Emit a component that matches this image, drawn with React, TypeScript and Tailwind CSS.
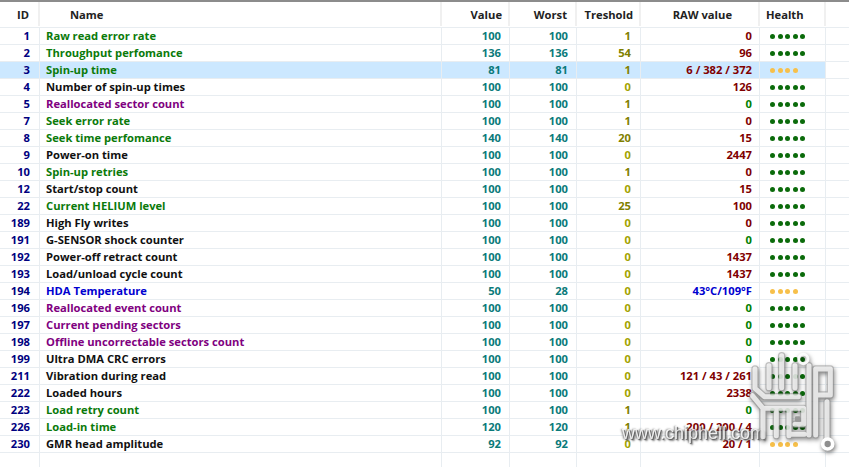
const GREEN = "text-[#0a7a0a]";
const BLACK = "text-[#111111]";
const PURPLE = "text-[#800080]";
const BLUE = "text-[#0000d0]";
const OK = "text-[#008000]";

type Row = {
  id: number;
  name: string;
  color: string;
  value: number;
  worst: number;
  tresh: number;
  raw: string;
  rawColor?: string;
  dots?: number;
  selected?: boolean;
};

const ROWS: Row[] = [
  { id: 1, name: "Raw read error rate", color: GREEN, value: 100, worst: 100, tresh: 1, raw: "0" },
  { id: 2, name: "Throughput perfomance", color: GREEN, value: 136, worst: 136, tresh: 54, raw: "96" },
  { id: 3, name: "Spin-up time", color: GREEN, value: 81, worst: 81, tresh: 1, raw: "6 / 382 / 372", dots: 4, selected: true },
  { id: 4, name: "Number of spin-up times", color: BLACK, value: 100, worst: 100, tresh: 0, raw: "126" },
  { id: 5, name: "Reallocated sector count", color: PURPLE, value: 100, worst: 100, tresh: 1, raw: "0", rawColor: OK },
  { id: 7, name: "Seek error rate", color: GREEN, value: 100, worst: 100, tresh: 1, raw: "0" },
  { id: 8, name: "Seek time perfomance", color: GREEN, value: 140, worst: 140, tresh: 20, raw: "15" },
  { id: 9, name: "Power-on time", color: BLACK, value: 100, worst: 100, tresh: 0, raw: "2447" },
  { id: 10, name: "Spin-up retries", color: GREEN, value: 100, worst: 100, tresh: 1, raw: "0" },
  { id: 12, name: "Start/stop count", color: BLACK, value: 100, worst: 100, tresh: 0, raw: "15" },
  { id: 22, name: "Current HELIUM level", color: GREEN, value: 100, worst: 100, tresh: 25, raw: "100" },
  { id: 189, name: "High Fly writes", color: BLACK, value: 100, worst: 100, tresh: 0, raw: "0" },
  { id: 191, name: "G-SENSOR shock counter", color: BLACK, value: 100, worst: 100, tresh: 0, raw: "0", rawColor: OK },
  { id: 192, name: "Power-off retract count", color: BLACK, value: 100, worst: 100, tresh: 0, raw: "1437" },
  { id: 193, name: "Load/unload cycle count", color: BLACK, value: 100, worst: 100, tresh: 0, raw: "1437" },
  { id: 194, name: "HDA Temperature", color: BLUE, value: 50, worst: 28, tresh: 0, raw: "43°C/109°F", rawColor: BLUE, dots: 4 },
  { id: 196, name: "Reallocated event count", color: PURPLE, value: 100, worst: 100, tresh: 0, raw: "0", rawColor: OK },
  { id: 197, name: "Current pending sectors", color: PURPLE, value: 100, worst: 100, tresh: 0, raw: "0", rawColor: OK },
  { id: 198, name: "Offline uncorrectable sectors count", color: PURPLE, value: 100, worst: 100, tresh: 0, raw: "0", rawColor: OK },
  { id: 199, name: "Ultra DMA CRC errors", color: BLACK, value: 100, worst: 100, tresh: 0, raw: "0", rawColor: OK },
  { id: 211, name: "Vibration during read", color: BLACK, value: 100, worst: 100, tresh: 0, raw: "121 / 43 / 261" },
  { id: 222, name: "Loaded hours", color: BLACK, value: 100, worst: 100, tresh: 0, raw: "2338" },
  { id: 223, name: "Load retry count", color: GREEN, value: 100, worst: 100, tresh: 1, raw: "0", rawColor: OK },
  { id: 226, name: "Load-in time", color: GREEN, value: 120, worst: 120, tresh: 1, raw: "200 / 200 / 4" },
  { id: 230, name: "GMR head amplitude", color: BLACK, value: 92, worst: 92, tresh: 0, raw: "20 / 1", dots: 4 },
];

const CELL = "h-full shrink-0 border-r border-[#e8edf1]";

function Dots({ count }: { count: number }) {
  const color = count === 5 ? "bg-[#0b6b0b]" : "bg-[#f7c04a]";
  return (
    <div className="flex gap-[2.5px] pl-[10px]">
      {Array.from({ length: count }).map((_, i) => (
        <span key={i} className={`h-[5px] w-[5px] rounded-full ${color}`} />
      ))}
    </div>
  );
}

function Header({ label, className }: { label: string; className: string }) {
  return <div className={`h-[24px] shrink-0 border-r-2 border-[#f0f0f0] leading-[26px] text-[#222222] ${className}`}>{label}</div>;
}

function Watermark() {
  const shapes =
    "M30 72 V130 L58 155 H160 M72 62 V128 M110 32 V128 M150 62 V128 M192 62 V270 M212 72 H256 V150 H216 M212 72 V270 M246 170 V285 M22 152 L54 190 V275 M62 190 H176 M94 190 V272 M132 192 V272 M132 268 H178 M176 192 V238 H150";
  return (
    <div className="absolute left-[622px] top-[345px] h-[122px] w-[227px]">
      <span className="absolute left-0 top-[77px] font-['Liberation_Sans',sans-serif] text-[18px] font-normal leading-[22px] text-white/85 opacity-90 [text-shadow:1px_1px_1px_#444,-1px_0_2px_#666,2px_2px_2px_#666]">
        www.chiphell.com
      </span>
      <svg
        className="absolute left-[123px] top-0 drop-shadow-[1px_2px_2px_rgba(0,0,0,0.55)]"
        width="104"
        height="122"
        viewBox="0 0 312 366"
        fill="none"
        strokeLinecap="round"
        strokeLinejoin="round"
      >
        <path d={shapes} stroke="#8f8f8f" strokeWidth="22" opacity="0.5" />
        <path d={shapes} stroke="#ffffff" strokeWidth="15" opacity="0.75" />
        <circle cx="175" cy="42" r="14" stroke="#ffffff" strokeWidth="9" opacity="0.9" />
        <rect x="150" y="214" width="16" height="16" rx="3" fill="#999999" />
        <circle cx="248" cy="297" r="15" fill="#8f8f8f" stroke="#ffffff" strokeWidth="11" />
      </svg>
    </div>
  );
}

export default function App() {
  return (
    <div className="relative flex h-[467px] w-[849px] flex-col overflow-hidden bg-white font-['Open_Sans','Noto_Sans',sans-serif] text-[11.2px] font-bold">
      <div className="h-[2px] shrink-0 bg-[#8c8c8c]" />
      <div className="flex h-[26px] shrink-0 border-b border-[#e8edf1]">
        <Header label="ID" className="w-[40px] pr-[9px] text-right" />
        <Header label="Name" className="w-[402px] pl-[30px]" />
        <Header label="Value" className="w-[68px] pr-[6px] text-right" />
        <Header label="Worst" className="w-[67px] pr-[8px] text-right" />
        <Header label="Treshold" className="w-[64px] pr-[6px] text-right" />
        <Header label="RAW value" className="w-[119px] pr-[26px] text-right" />
        <Header label="Health" className="w-[66px] pl-[6px]" />
      </div>
      {ROWS.map((r) => (
        <div key={r.id} className="h-[17px] shrink-0 border-b border-[#e8edf1]">
          <div className={`flex h-full w-[826px] items-center leading-[16px] ${r.selected ? "bg-[#cce8ff]" : ""}`}>
            <div className={`${CELL} w-[40px] pr-[9px] text-right text-[#000080]`}>{r.id}</div>
            <div className={`${CELL} w-[402px] truncate pl-[6px] ${r.color}`}>{r.name}</div>
            <div className={`${CELL} w-[68px] pr-[8px] text-right text-[#0a7a7a]`}>{r.value}</div>
            <div className={`${CELL} w-[67px] pr-[8px] text-right text-[#0a7a7a]`}>{r.worst}</div>
            <div className={`${CELL} w-[64px] pr-[9px] text-right ${r.tresh === 0 ? "text-[#a3a300]" : "text-[#808000]"}`}>{r.tresh}</div>
            <div className={`${CELL} w-[119px] pr-[7px] text-right ${r.rawColor ?? "text-[#800000]"}`}>{r.raw}</div>
            <div className={`${CELL} flex w-[66px] items-center`}>
              <Dots count={r.dots ?? 5} />
            </div>
          </div>
        </div>
      ))}
      <div className="flex w-[826px] flex-1">
        <div className={`${CELL} w-[40px]`} />
        <div className={`${CELL} w-[402px]`} />
        <div className={`${CELL} w-[68px]`} />
        <div className={`${CELL} w-[67px]`} />
        <div className={`${CELL} w-[64px]`} />
        <div className={`${CELL} w-[119px]`} />
        <div className={`${CELL} w-[66px]`} />
      </div>
      <Watermark />
    </div>
  );
}
